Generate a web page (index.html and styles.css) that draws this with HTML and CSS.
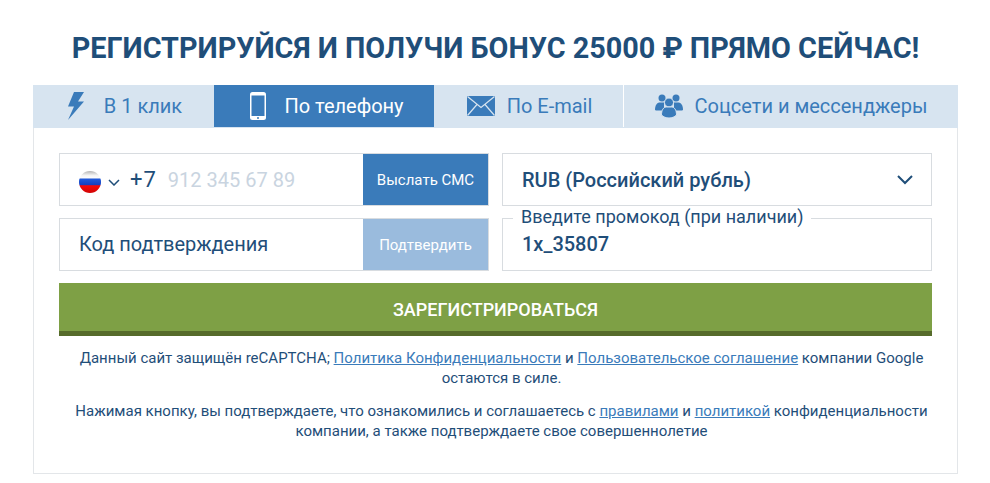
FILE: index.html
```html
<!DOCTYPE html>
<html>

<head>
    <meta charset="UTF-8">
    <title>Регистрация</title>
    <link rel="stylesheet" href="styles.css">
</head>

<body>

<h1 class="title">РЕГИСТРИРУЙСЯ И ПОЛУЧИ БОНУС 25000 ₽ ПРЯМО СЕЙЧАС!</h1>

<div class="box">
    <div class="tabs">
        <a class="tab tab-click">
            <svg class="tab-icon" width="20" height="30" viewBox="0 0 20 30"><path d="M8 1h10l-6 9.500h6L2 29l6-13.500H2z" fill="#3a7bba"/></svg>
            В 1 клик
        </a>
        <a class="tab tab-phone on">
            <svg class="tab-icon" width="16" height="28" viewBox="0 0 16 28"><rect width="16" height="28" rx="2.500" fill="#fff"/><rect x="1.500" y="3.500" width="13" height="20.500" fill="#3a7bba"/><circle cx="8" cy="26" r="1" fill="#3a7bba"/></svg>
            По телефону
        </a>
        <a class="tab tab-mail">
            <svg class="tab-icon" width="28" height="20" viewBox="0 0 28 20"><rect width="28" height="20" fill="#3a7bba"/><path d="M0.500 0.500 14 11.500 27.500 0.500M0.500 19.500 10 8.500M27.500 19.500 18 8.500" fill="none" stroke="#d7e4f0" stroke-width="1.200"/></svg>
            По E-mail
        </a>
        <a class="tab tab-social">
            <svg class="tab-icon" width="28" height="24" viewBox="0 0 28 24"><g fill="#3a7bba"><circle cx="7" cy="4" r="3.500"/><circle cx="21" cy="4" r="3.500"/><path d="M0 16c0-5 2-7.500 5-7.500h4v8H1z"/><path d="M28 16c0-5-2-7.500-5-7.500h-4v8h8z"/></g><circle cx="14" cy="8.500" r="4.500" fill="#3a7bba" stroke="#d7e4f0"/><path d="M6.500 21c0-5 2-8 5-8h5c3 0 5 3 5 8-2 2-4.500 3-7.500 3s-5.500-1-7.500-3z" fill="#3a7bba" stroke="#d7e4f0"/></svg>
            Соцсети и мессенджеры
        </a>
    </div>

    <div class="form">
        <div class="fields">
            <div class="field">
                <div class="field-main phone">
                    <svg class="flag" width="22" height="22" viewBox="0 0 22 22">
                        <defs>
                            <linearGradient id="flagstripes" x1="0" y1="0" x2="0" y2="1">
                                <stop offset="0" stop-color="#b4b4b4"/>
                                <stop offset="0.200" stop-color="#f4f4f4"/>
                                <stop offset="0.300" stop-color="#fbfbfb"/>
                                <stop offset="0.380" stop-color="#2058d8"/>
                                <stop offset="0.620" stop-color="#1440c0"/>
                                <stop offset="0.670" stop-color="#f80808"/>
                                <stop offset="1" stop-color="#d00404"/>
                            </linearGradient>
                        </defs>
                        <circle cx="11" cy="11" r="11" fill="url(#flagstripes)"/>
                    </svg>
                    <svg class="arrow-small" width="12" height="7" viewBox="0 0 12 7"><path d="M1 1l5 5 5-5" fill="none" stroke="#1f4e79" stroke-width="1.500"/></svg>
                    <span class="code">+7</span>
                    <span class="placeholder">912 345 67 89</span>
                </div>
                <a class="field-btn">Выслать СМС</a>
            </div>
            <div class="field select">
                <span>RUB (Российский рубль)</span>
                <svg width="18" height="10" viewBox="0 0 18 10"><path d="M2 1l7 7 7-7" fill="none" stroke="#1f4e79" stroke-width="2"/></svg>
            </div>
            <div class="field">
                <div class="field-main confirm">Код подтверждения</div>
                <a class="field-btn disabled">Подтвердить</a>
            </div>
            <div class="field promo">
                <span class="promo-label">Введите промокод (при наличии)</span>
                <span>1x_35807</span>
            </div>
        </div>

        <a class="submit">ЗАРЕГИСТРИРОВАТЬСЯ</a>

        <p class="note">Данный сайт защищён reCAPTCHA; <a href="#">Политика Конфиденциальности</a> и <a href="#">Пользовательское соглашение</a> компании Google остаются в силе.</p>
        <p class="note">Нажимая кнопку, вы подтверждаете, что ознакомились и соглашаетесь с <a href="#">правилами</a> и <a href="#">политикой</a> конфиденциальности компании, а также подтверждаете свое совершеннолетие</p>
    </div>
</div>

</body>

</html>
```

FILE: styles.css
```css
* {
    margin: 0;
    padding: 0;
    box-sizing: border-box;
}
body {
    padding: 0 32px 0 33px;
    font-family: Roboto, "Liberation Sans", sans-serif;
    color: #1f4e79;
    background: #fff;
}
.title {
    height: 85px;
    padding-top: 29px;
    font-size: 28.8px;
    line-height: 38px;
    font-weight: 700;
    text-align: center;
    white-space: nowrap;
}
.box {
    height: 389px;
    border: 1px solid #e3e6e9;
    border-top: 0;
}
.tabs {
    display: flex;
    height: 43px;
    margin: 0 -1px;
    background: #d7e4f0;
    border-bottom: 1px solid #d7e4f0;
}
.tab {
    display: flex;
    align-items: center;
    justify-content: center;
    height: 42px;
    font-size: 20px;
    color: #3a7bba;
    white-space: nowrap;
}
.tab-click {
    width: 181px;
    padding-left: 1px;
    gap: 18px;
}
.tab-phone {
    width: 220px;
    padding-left: 6px;
    gap: 18px;
}
.tab-mail {
    width: 187px;
    margin-left: 2px;
    gap: 12px;
}
.tab-social {
    flex: 1;
    gap: 12px;
    border-left: 1px solid #fff;
}
.tab.on {
    color: #fff;
    background: #3a7bba;
}
.form {
    padding: 25px 25px 0;
}
.fields {
    display: grid;
    grid-template-columns: 430px 430px;
    grid-auto-rows: 53px;
    gap: 12px 13px;
}
.field {
    position: relative;
    display: flex;
    align-items: center;
    border: 1px solid #d8dce0;
    font-size: 20px;
}
.field-main {
    flex: 1;
    padding-left: 19px;
}
.confirm {
    padding-bottom: 2px;
}
.phone {
    display: flex;
    align-items: center;
}
.flag {
    margin-top: 4px;
}
.arrow-small {
    margin: 6px 0 0 7px;
}
.code {
    margin-left: 10px;
    font-size: 22px;
    letter-spacing: 1px;
}
.placeholder {
    margin-left: 11px;
    color: #c9d4e0;
}
.field-btn {
    display: flex;
    align-items: center;
    justify-content: center;
    width: 125px;
    height: 100%;
    font-size: 15px;
    color: #fff;
    background: #3a7bba;
}
.field-btn.disabled {
    background: #9abbdd;
}
.select {
    justify-content: space-between;
    padding: 0 17px 0 19px;
    font-weight: 500;
}
.promo {
    padding: 0 0 2px 19px;
    font-weight: 500;
}
.promo-label {
    position: absolute;
    top: -12px;
    left: 10px;
    padding: 0 8px;
    font-size: 18px;
    line-height: 20px;
    font-weight: 400;
    background: #fff;
}
.submit {
    display: block;
    height: 53px;
    margin-top: 12px;
    border-bottom: 5px solid #566b2b;
    font-size: 18px;
    line-height: 54px;
    font-weight: 500;
    text-align: center;
    color: #fff;
    background: #7ea045;
}
.note {
    margin: 12px -6px 0 6px;
    font-size: 15px;
    line-height: 20px;
    text-align: center;
}
.note + .note {
    margin-top: 13px;
}
.note a {
    color: #3a7bba;
    text-decoration: underline;
}
```
